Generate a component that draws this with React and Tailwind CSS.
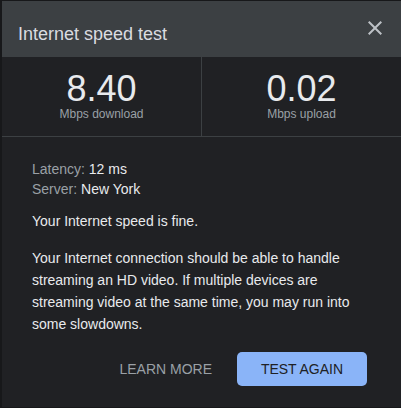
export default function App() {
  const font = { fontFamily: '"Liberation Sans", Arial, sans-serif' };
  return (
    <div className="w-[401px] h-[408px] bg-[#17181a] pl-[2px] pt-[1px] overflow-hidden" style={font}>
      <div className="w-[399px] h-[406px] bg-[#202124] flex flex-col">
        <div className="h-[56px] bg-[#3c4043] flex items-start justify-between pl-[16px] pr-[14px] pt-[20px]">
          <div className="text-[18px] leading-normal text-[#dadce0]">Internet speed test</div>
          <svg width="24" height="24" viewBox="0 0 24 24" className="-mt-[5px]" fill="#bdc1c6">
            <path d="M19 6.41L17.59 5 12 10.59 6.41 5 5 6.41 10.59 12 5 17.59 6.41 19 12 13.41 17.59 19 19 17.59 13.41 12z" />
          </svg>
        </div>
        <div className="flex border-b border-[#3c4043]">
          <div className="w-[200px] border-r border-[#3c4043] flex flex-col items-center pt-[14px] pb-[15px]">
            <div className="text-[36px] leading-[36px] text-[#e8eaed]">8.40</div>
            <div className="text-[12px] leading-[14px] text-[#9aa0a6]">Mbps download</div>
          </div>
          <div className="flex-1 flex flex-col items-center pt-[14px] pb-[15px]">
            <div className="text-[36px] leading-[36px] text-[#e8eaed]">0.02</div>
            <div className="text-[12px] leading-[14px] text-[#9aa0a6]">Mbps upload</div>
          </div>
        </div>
        <div className="flex flex-col pl-[30px] pr-[32px] pt-[22px]">
          <div className="text-[14px] leading-[20px]">
            <span className="text-[#9aa0a6]">Latency: </span>
            <span className="text-[#e8eaed]">12 ms</span>
          </div>
          <div className="text-[14px] leading-[20px]">
            <span className="text-[#9aa0a6]">Server: </span>
            <span className="text-[#e8eaed]">New York</span>
          </div>
          <div className="mt-[11px] text-[14px] leading-[22px] text-[#e8eaed]">Your Internet speed is fine.</div>
          <div className="mt-[15px] text-[14px] leading-[22px] text-[#e8eaed]">
            Your Internet connection should be able to handle streaming an HD video. If multiple devices are streaming video at the same time, you may run into some slowdowns.
          </div>
          <div className="mt-[17px] flex items-center justify-end mr-[2px]">
            <div className="text-[14px] text-[#9aa0a6] mr-[25px]">LEARN MORE</div>
            <div className="w-[130px] h-[34px] rounded-[5px] bg-[#8ab4f8] flex items-center justify-center text-[14px] text-[#202124]">
              TEST AGAIN
            </div>
          </div>
        </div>
      </div>
    </div>
  );
}
